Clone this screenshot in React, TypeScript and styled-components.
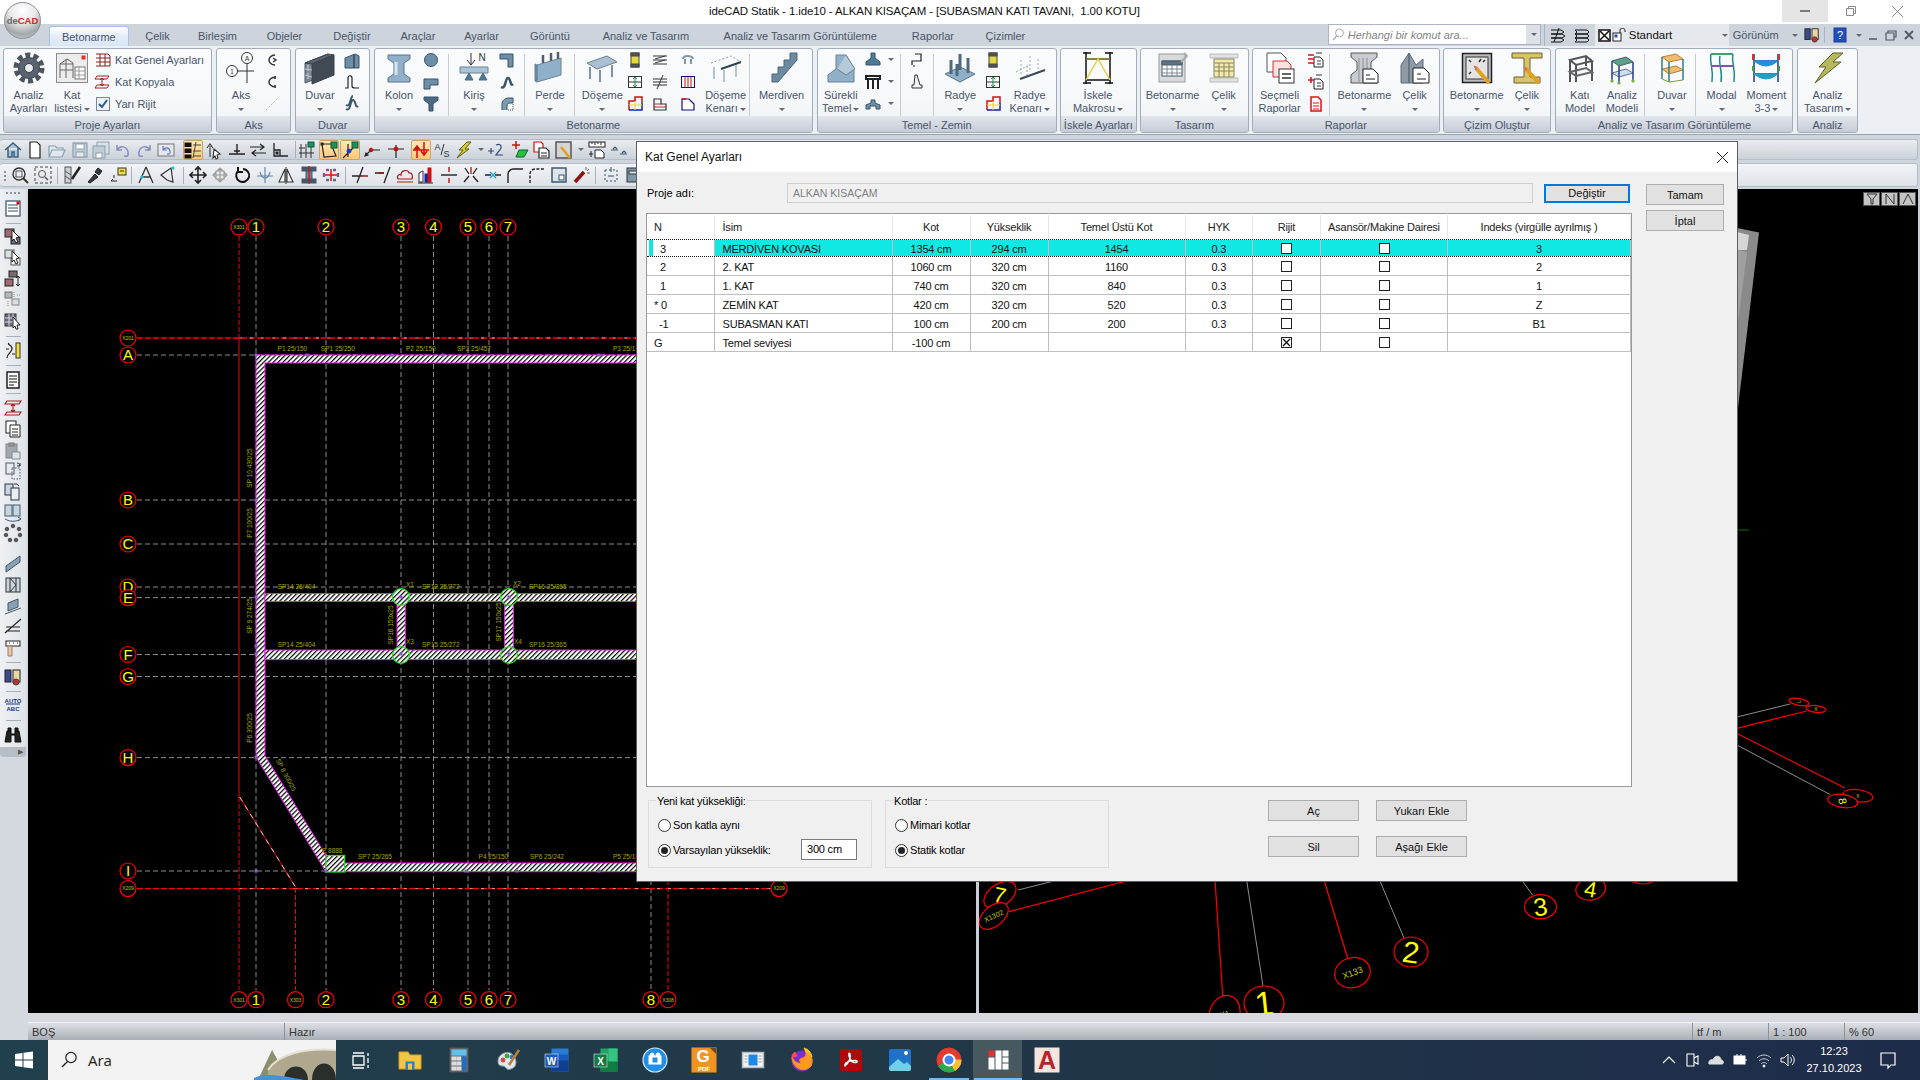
import React from "react"
import styled, { createGlobalStyle } from "styled-components"

const GlobalStyle = createGlobalStyle`
  html, body { margin: 0; padding: 0; background: #000; }
  body { font-family: "Liberation Sans", Arial, sans-serif; font-size: 11px; color: #000; }
  * { box-sizing: border-box; }
`

const IconText = styled.text`
  font-family: "Liberation Sans", sans-serif;
  text-anchor: middle;
  fill: #333;
`

const MiniWord = styled.text`
  font-family: "Liberation Sans", sans-serif;
  font-size: 6px;
  font-weight: bold;
  text-anchor: middle;
  fill: #1a3a7a;
`

const TaskLetter = styled.text<{ $size?: number }>`
  font-family: "Liberation Sans", sans-serif;
  font-size: ${(p) => p.$size ?? 10}px;
  font-weight: bold;
  fill: #fff;
  text-anchor: middle;
`

const AutoLetter = styled.text`
  font-family: "Liberation Sans", sans-serif;
  font-size: 25px;
  font-weight: bold;
  fill: #b8242c;
  text-anchor: middle;
`

const HelpMark = styled.text`
  font-family: "Liberation Sans", sans-serif;
  font-size: 11px;
  text-anchor: middle;
  fill: #fff;
`

const P = (d: string, s = "#222", w = 1, f = "none") => <path d={d} stroke={s} strokeWidth={w} fill={f} />
const R = (x: number, y: number, w: number, h: number, f = "none", s = "#222", sw = 1) => (
  <rect x={x} y={y} width={w} height={h} fill={f} stroke={s} strokeWidth={sw} />
)
const C = (x: number, y: number, r: number, f = "none", s = "#222", sw = 1) => (
  <circle cx={x} cy={y} r={r} fill={f} stroke={s} strokeWidth={sw} />
)

const BLUE = "#8fb0c8"
const NAVY = "#10108a"

const largeIcons: Record<string, React.ReactNode> = {
  gear: (
    <>
      <circle cx="16" cy="16" r="13" fill="none" stroke="#4d5560" strokeWidth="5" strokeDasharray="5 3.17" />
      {C(16, 16, 10.5, "#5a6470", "#3f4750")}
      {C(16, 16, 4.5, "#e8eaec", "#343a42")}
    </>
  ),
  katlist: (
    <>
      {R(0.5, 1.5, 31, 29, "#ececec", "#8a8a8a")}
      {P("M4 26V12L11 7l6 4v15M4 18h13M4 12h13M10 7v19", "#666")}
      {R(19, 15, 10, 12, "#fff", "#777")}
      {P("M19 19h10M19 23h10M23 15v12", "#999")}
      {R(26, 4, 3, 3, "#e03030", "#e03030")}
    </>
  ),
  aks: (
    <>
      {C(22, 6, 5.5, "#fff", "#333")}
      {C(7, 19, 5.5, "#fff", "#333")}
      {P("M22 12v19M12 19h17", "#333")}
      <IconText x="22" y="8.5" fontSize="7">A</IconText>
      <IconText x="7" y="21.5" fontSize="7">1</IconText>
    </>
  ),
  wall: (
    <>
      {P("M1 11L24 2v20L1 31z", "#4a5560", 1, "#808b96")}
      {P("M1 11L24 2l6 1L8 12z", "#39424c", 1, "#5a6570")}
      {P("M8 12L30 3v20L8 32z", "#39424c", 1, "#414b55")}
      {P("M1 17l7 1M1 23l7 2M4 13v6M4 21v6", "#c0c8d0")}
    </>
  ),
  column: (
    <>
      {P("M5 3h22v4l-6 4v11l6 4v4H5v-4l6-4V11L5 7z", "#5a7488", 1, BLUE)}
      {P("M13 10v13", "#d8e6f0", 3)}
    </>
  ),
  beam: (
    <>
      {P("M2 15h28v6H2z", "#6a8296", 1, "#aac4d6")}
      {P("M7 28l4-7 4 7zM21 28l4-7 4 7z", "#4e6a80", 1, "#4e7a94")}
      {P("M13 1v12M9 8l4 5 4-5", "#333")}
      <IconText x="24" y="9" fontSize="10">N</IconText>
    </>
  ),
  shear: (
    <>
      {P("M3 13l24-7v17L3 30z", "#6a8296", 1, BLUE)}
      {P("M3 13l-2-1v17l2 1z", "#6a8296", 1, "#6f8aa0")}
      {P("M9 11V3M17 9V1M24 7V0", "#4e6070", 2.5)}
    </>
  ),
  slab: (
    <>
      {P("M1 11L21 4l10 6-20 7z", "#6a8296", 1, "#a8c0d2")}
      {P("M4 15v12M26 13v12M14 18v12", "#7a93a8", 2)}
    </>
  ),
  slabEdge: (
    <>
      <path d="M1 11L21 4l10 6" fill="none" stroke="#8ca0b0" strokeDasharray="2 2" />
      {P("M11 17l20-7", "#30404e", 2)}
      {P("M4 15v12M26 13v12M14 18v12", "#a0b4c4", 1.5)}
    </>
  ),
  stair: <>{P("M31 1h-7v7h-6v7h-6v7H6v8h6l19-22z", "#4a6478", 1, "#6d8aa0")}</>,
  strip: (
    <>
      {P("M11 3h10l8 14v13H3v-7l8-6z", "#6a8296", 1, BLUE)}
      {P("M21 3l9 14-9 6-9-6", "#6a8296", 1, "#b4cad8")}
    </>
  ),
  raft: (
    <>
      {P("M1 22l15-7 15 7-15 8z", "#5a7488", 1, BLUE)}
      {P("M7 22V8M16 18V2M24 21V6M13 24V12", "#4e6a80", 3)}
    </>
  ),
  raftEdge: (
    <>
      <path d="M2 20l13-7M7 22V8M16 18V2M24 21V6M13 24V12" fill="none" stroke="#9aabb8" strokeDasharray="2 2" />
      {P("M6 27l25-9", "#3a4a58", 2)}
    </>
  ),
  scaffold: (
    <>
      {P("M4 0v32M28 0v32M1 1h8M23 1h8M1 31h8M23 31h8", "#111", 1.5)}
      {P("M4 7h24M4 28h24", "#111", 1.5)}
      {P("M4 28L16 7l12 21", "#e8d040", 1.5)}
      {P("M4 7h24", "#e8d040", 0.8)}
    </>
  ),
  designRc: (
    <>
      {R(2, 2, 26, 28, "#d8dadc", "#9a9a9a")}
      {R(5, 9, 20, 15, "#fff", "#475a68")}
      {P("M5 9h20v4H5z", "#475a68", 1, "#5c7486")}
      {P("M5 17h20M5 21h20M10 13v11M15 13v11M20 13v11", "#7a8a96")}
      {P("M27 1l3 3-6 6", "#aaa", 2)}
    </>
  ),
  designSteel: (
    <>
      {P("M2 2h28v4H2zM2 26h28v4H2z", "#bbb", 1, "#e0e0e0")}
      {R(6, 7, 20, 18, "#f4eab0", "#8a8560")}
      {P("M6 11h20M6 15h20M6 19h20M11 11v14M16 11v14M21 11v14", "#8a8560")}
    </>
  ),
  report: (
    <>
      {P("M3 1h14l5 5v14H3z", "#555", 1, "#fff")}
      {P("M9 9h14l4 4v12H9z", "#d03030", 1, "#fde0e0")}
      {R(15, 17, 15, 14, "#fff", "#333")}
      {P("M18 22h9M18 26h9", "#333", 1.5)}
    </>
  ),
  repRc: (
    <>
      {P("M3 1h26v4l-6 5v8l6 5v8H3v-8l6-5v-8L3 5z", "#555", 1, "#c8ccd0")}
      {P("M11 6v24M15 6v24M19 6v24", "#8a8f96")}
      {P("M15 17h10l5 5v9H15z", "#222", 1, "#fff")}
      {P("M18 23h4M18 27h9", "#222")}
    </>
  ),
  repSteel: (
    <>
      {P("M2 31V13l8-12v30zM10 1l7 12 7-6v24H10z", "#5a6a78", 1, "#8f9aa6")}
      {P("M14 16h11l5 5v10H14z", "#222", 1, "#fff")}
      {P("M18 22h4M18 27h9", "#222")}
    </>
  ),
  drawRc: (
    <>
      {R(1.5, 1.5, 29, 29, "#bcbcbc", "#222", 1.5)}
      {R(5, 5, 22, 22, "#e4e4e4", "#333")}
      {P("M8 8l2 2M20 7l-2 3M24 8l-2 2M8 22l2-2", "#333", 1.5)}
      {P("M15 16l13 15", "#e0a020", 4)}
      {P("M13 14l3 1-1 3z", "#d87070", 1, "#d87070")}
    </>
  ),
  drawSteel: (
    <>
      {P("M1 1h30v5H19v19h10v6H3v-6h10V6H1z", "#6a6230", 1, "#d8c468")}
      {P("M15 17l13 14", "#e0a020", 4)}
      {P("M13 15l3 1-1 3z", "#d87070", 1, "#d87070")}
    </>
  ),
  solid: (
    <>
      {P("M6 8l16-4 6 5-16 4zM6 8v22M12 13v17M28 9v20M22 4v10", "#555", 2)}
      {P("M6 20l16-4 6 4-16 4z", "#666", 2)}
    </>
  ),
  anModel: (
    <>
      {P("M6 9l14-4 7 5-14 4z", "#44606a", 1, "#5da08a")}
      {P("M6 21l14-4 7 4-14 4z", "#5a70a0", 1, "#d0dcf0")}
      {P("M6 9v19M13 14v16M27 10v18", "#22408a", 1.5)}
      {C(6, 29, 1.2, "#80b040", "#80b040")}
      {C(13, 31, 1.2, "#80b040", "#80b040")}
      {C(27, 29, 1.2, "#80b040", "#80b040")}
    </>
  ),
  wallView: (
    <>
      {P("M6 5l14-3 7 5-14 3zM6 17l14-3 7 4-14 4z", "#b88030", 1, "#f0bc70")}
      {P("M6 5v22M13 10v20M27 7v21", "#2f7f8a", 1.5)}
      {P("M6 27l7 3 14-2", "#80a040")}
    </>
  ),
  modal: (
    <>
      {P("M5 2h22M5 2c-2 9 3 14 1 28M14 4c-2 9 3 14 1 26M27 2c-2 9 3 14 1 28", "#1f8a8a", 1.5)}
      {P("M5 14l22 0", "#8a50b0", 2)}
      {P("M5 2h22", "#3fa070", 2)}
    </>
  ),
  moment: (
    <>
      {P("M4 2v28M28 2v28M4 9h24M4 22h24", "#1a3a8a", 1.5)}
      {P("M4 9q12 10 24 0z", "#2090d8", 1, "#2090d8")}
      {P("M4 22q12 10 24 0z", "#20a0c0", 1, "#20a0c0")}
      {P("M3 2v6M29 2v6", "#d03030", 2)}
      {P("M3 14v5M29 14v5", "#40a040", 2)}
    </>
  ),
  bolt: <>{P("M21 1L7 15h7L3 31l26-21h-8l10-9z", "#606020", 1, "#b6b85e")}</>
}

const smallIcons: Record<string, React.ReactNode> = {
  stack: <>{P("M1 2h12l2 2v10M1 6h14M1 10h14M1 14h14M5 2v12M10 2v12", "#8a2020")}</>,
  copyFloor: <>{P("M2 2h12l-2 3H0zM2 11h12l-2 3H0zM7 5v6M5 6l2-2 2 2M5 10l2 2 2-2", "#a02020")}</>,
  check: (
    <>
      {R(1.5, 1.5, 13, 13, "#eef2f6", "#7a8796")}
      {P("M4 8l3 3 5-7", "#2a5a90", 2)}
    </>
  ),
  axisL: <>{P("M11 3c-4 0-6 3-6 5s2 5 6 5M9 6l3 2-3 2", "#333", 1.5)}</>,
  axisC: <>{P("M12 3c-5 0-7 3-7 5s2 5 7 5M11 2v3M11 11v3", "#333", 1.5)}</>,
  axisD: <path d="M2 14L14 2" stroke="#bbb" strokeDasharray="2 1.5" fill="none" />,
  wallA: (
    <>
      {P("M1 6l10-4 4 2v12H1z", "#37556a", 1, "#6d8ea6")}
      {P("M10 3v13", "#223")}
    </>
  ),
  wallB: <>{P("M1 14h3V4c0-3 4-3 4 0v8c0 2 3 2 3 2h4", "#222", 1.2)}</>,
  wallC: <>{P("M2 13c5 3 4-9 7-9s2 9 5 6M2 9c5 3 4-9 7-9", "#3a5a72", 2)}</>,
  circle: <>{C(8, 8, 6.5, "#6d8ea6", "#37556a")}</>,
  lcol: <>{P("M1 5h14v6H7v4H1z", "#37556a", 1, "#6d8ea6")}</>,
  cap: <>{P("M1 1h14v3l-5 4v7H6V8L1 4z", "#37556a", 1, "#4e6a80")}</>,
  beamL: <>{P("M1 2h13v13H9V7H1z", "#37556a", 1, "#6d8ea6")}</>,
  beamS: <>{P("M2 13c5 3 4-9 7-9s2 9 5 6", "#37556a", 2.5)}</>,
  beamC: (
    <>
      {P("M3 14V8c0-3 3-6 6-6h5v5h-3c-2 0-3 1-3 3v4", "#37556a", 1, "#7c9ab0")}
      <path d="M9 14h5V7" stroke="#555" strokeDasharray="1 1" fill="none" />
    </>
  ),
  panelY: (
    <>
      {R(4, 1, 8, 14, "#e4d840", "#444")}
      {R(4, 1, 8, 3, "#555", "#444")}
      {R(4, 12, 8, 3, "#555", "#444")}
    </>
  ),
  gridG: (
    <>
      {R(1.5, 2.5, 13, 11, "#fff", "#333")}
      {P("M1 8h14", "#333")}
      {P("M8 3v10M6 5l2-2 2 2M6 11l2 2 2-2", "#109040")}
    </>
  ),
  corner: (
    <>
      {P("M2 14V5h6V1h7v6", "#d01010", 1.5)}
      {P("M2 14h13V7", "#1020b0", 1.5)}
      {P("M2 9h13M8 5v9", "#e8d830")}
    </>
  ),
  slabH: <>{P("M1 4h14M3 7l10-3M1 8h14M3 11l10-3M1 12h14", "#333")}</>,
  slabTop: <>{P("M3 7c0-4 9-4 10 0M5 7v5M11 7v5", "#8099aa", 2)}</>,
  slash: <>{P("M1 5h14M1 8h14M1 11h14M11 1L5 15", "#333")}</>,
  arrows: (
    <>
      {R(1.5, 2.5, 13, 11, "#fff", NAVY)}
      {P("M5 3v10M8 3v10M11 3v10", "#d01010")}
    </>
  ),
  slabL: (
    <>
      {P("M2 14V3h7v5h5v6z", "#333", 1.2)}
      {P("M2 11h12M2 8h7", "#a03030")}
    </>
  ),
  slabK: (
    <>
      {P("M2 14V3h7l5 5v6z", NAVY, 1.2, "#fff")}
      {P("M2 3h4", "#d01010", 1.5)}
    </>
  ),
  stepA: (
    <>
      {P("M6 2h6v7H3v4", "#222", 1.2, "none")}
      {P("M4 14h2", "#222")}
    </>
  ),
  stepB: <>{P("M6 1h2l3 10h2v3H3v-3h2z", "#333", 1, "#f0f4f8")}</>,
  foot1: <>{P("M6 1h4v5l5 4v3H1v-3l5-4z", "#37556a", 1, "#4e7a94")}</>,
  foot2: <>{P("M1 2h14v3H1zM3 5v10M8 5v10M13 5v10", "#222", 2)}</>,
  foot3: <>{P("M6 4h4v3l5 2v4h-4v-3H5v3H1V9l5-2z", "#37556a", 1, "#6d8ea6")}</>,
  rpt1: (
    <>
      {P("M6 5h6l3 3v7H6z", "#222", 1, "#fff")}
      {P("M0 3h6M0 7h6M0 11h6", "#e01010", 1.5)}
      {P("M8 1h6M9 9h4M9 12h4", "#333")}
    </>
  ),
  rpt2: (
    <>
      {P("M6 5h6l3 3v7H6z", "#222", 1, "#fff")}
      {P("M0 6h6M3 3v6", "#e01010", 1.5)}
      {P("M8 1h6M9 9h4M9 12h4", "#333")}
    </>
  ),
  rpt3: (
    <>
      {P("M3 1h7l3 3v11H3z", "#e01010", 1.5, "#fff")}
      {P("M5 7h6M5 10h6M5 13h6", "#e01010")}
    </>
  ),
  quickA: <>{P("M1 3h10l3 2-3 2H1M1 7h11l3 2-3 2H1M1 11h10l3 2-3 2H1M9 1L4 15", "#111")}</>,
  quickB: <>{P("M1 3h12l2 2-2 2H1l2-2zM1 7h12l2 2-2 2H1l2-2zM1 11h12l2 2-2 2H1l2-2z", "#111")}</>
}

const toolIcons: Record<string, React.ReactNode> = {
  home: <>{P("M1 9l8-7 8 7M4 7v9h4v-5h2v5h4V7", "#3a6080", 1.5, "#a8c4d8")}</>,
  newdoc: <>{P("M4 1h7l3 3v13H4z", "#222", 1.2, "#fff")}</>,
  open: <>{P("M1 16V5h6l2 2h6v2M1 16l3-7h13l-3 7z", "#8ca0b0", 1.2, "#dfe8ee")}</>,
  save: (
    <>
      {R(2, 2, 14, 14, "#c0ccd6", "#8ca0b0", 1.2)}
      {R(5, 3, 8, 5, "#fff", "#8ca0b0")}
      {R(5, 11, 8, 5, "#e4eaf0", "#8ca0b0")}
    </>
  ),
  saveall: (
    <>
      {R(5, 1, 12, 12, "#d8e0e8", "#8ca0b0")}
      {R(1, 5, 12, 12, "#c0ccd6", "#8ca0b0")}
      {R(4, 12, 6, 5, "#fff", "#8ca0b0")}
    </>
  ),
  undo: <>{P("M4 4v5h5M4 9c3-5 10-4 11 2s-3 4-4 4", "#8a8ac8", 1.5)}</>,
  redo: <>{P("M14 4v5H9M14 9c-3-5-10-4-11 2s3 4 4 4", "#8a8ac8", 1.5)}</>,
  undo2: (
    <>
      {R(1, 3, 16, 12, "#e4e8ee", "#777")}
      {P("M6 5v4h4M6 9c2-3 6-3 7 1s-2 3-3 3", "#6a7ac0", 1.2)}
    </>
  ),
  layers: (
    <>
      {R(1, 2, 6, 3.5, "#111", "#111")}
      {R(1, 8, 6, 3.5, "#111", "#111")}
      {R(1, 14, 6, 3, "#111", "#111")}
      {P("M9 4h8M9 10h8M9 15h8M12 1L9 17", "#444")}
    </>
  ),
  cursor: <>{P("M5 16V5M2 7l3-4 3 4M9 8l6 5-3 1 1 3-2 1-1-3-2 2z", "#333", 1.1, "#fff")}</>,
  foot: <>{P("M9 3v10M1 13h16M6 10h6", "#222", 1.4)}</>,
  swap: <>{P("M1 6h14M11 3l4 3-4 3M17 12H3M7 9l-4 3 4 3", "#222", 1.2)}</>,
  ell: (
    <>
      {P("M3 2v13h14M3 9h6v6", "#222", 1.3)}
      {R(5, 11, 2, 2, "#222", "#222")}
    </>
  ),
  lockGrid: (
    <>
      {P("M3 3v14M8 3v14M13 5v12M1 12h15M1 7h6", "#333")}
      {R(10, 1, 6, 5, "#20905a", "#0c5c38")}
    </>
  ),
  lockPoly: (
    <>
      {P("M2 3h9l5 12-12 1z", "#222", 1.2)}
      {R(1, 2, 2, 2, "#222")}
      {R(11, 1, 6, 6, "#20905a", "#0c5c38")}
    </>
  ),
  lockSnap: (
    <>
      {P("M2 17L15 4M7 3v13", "#222", 1.2)}
      {C(8, 10, 2, "#1a3ac0", "#1a3ac0")}
      {R(11, 1, 6, 6, "#20905a", "#0c5c38")}
    </>
  ),
  pointA: (
    <>
      {P("M2 15l6-6h9M2 15l3-1-2-2z", "#222", 1.2)}
      {C(8, 9, 1.8, "#c01010", "#c01010")}
    </>
  ),
  pointB: (
    <>
      {P("M1 8h16M9 4v13", "#222", 1.2)}
      {C(9, 8, 2, "#c01010", "#c01010")}
    </>
  ),
  updown: <>{P("M5 17V6M2 9l3-4 3 4M12 1v12M9 10l3 4 3-4M1 9h16", "#d01010", 1.5)}</>,
  as: (
    <>
      <IconText x="4.5" y="9" fontSize="9">A</IconText>
      {P("M8 14L11 3", "#333")}
      <IconText x="13.5" y="16" fontSize="9">S</IconText>
    </>
  ),
  bolt: <>{P("M12 1L4 9h4l-6 8 12-9h-4l6-7z", "#5a5a10", 1, "#d8c830")}</>,
  plus2: (
    <>
      {P("M1 10h6M4 7v6", "#334a80", 1.2)}
      {P("M9 4c5-2 7 2 3 6l-3 4h7", "#334a80", 1.2)}
    </>
  ),
  greenPlus: (
    <>
      {P("M5 16l3-7h9l-4 7z", "#106030", 1, "#28c040")}
      {P("M1 4h8M5 0v8", "#d01010", 1.5)}
    </>
  ),
  copyRed: (
    <>
      {P("M2 1h7l2 2v8H2z", "#d01010", 1.2, "#fff")}
      {P("M7 7h7l3 3v7H7z", "#222", 1.2, "#fff")}
      {P("M9 12h6M9 15h6", "#222")}
    </>
  ),
  frameP: (
    <>
      {R(1, 1, 15, 16, "#d4d4d4", "#555", 1.5)}
      {P("M6 6l9 11", "#e0a020", 2.5)}
    </>
  ),
  ruler: (
    <>
      {R(1, 1, 16, 5, "#fff", "#222")}
      {P("M4 1v2M7 1v3M10 1v2M13 1v3", "#222")}
      {P("M7 9h6l3 3v5H7z", "#222", 1, "#fff")}
      {P("M3 10v6M1 13h4", "#222")}
    </>
  ),
  level: <>{P("M1 9h7M10 13h7M3 8l2-2 2 2M12 12l2-2 2 2", "#3a5a78", 1.2)}</>,
  zoomWin: (
    <>
      {C(8, 8, 6, "#e8eef4", "#333", 1.4)}
      {P("M12 12l5 5", "#333", 2)}
      {R(5, 5, 6, 6, "none", "#555")}
    </>
  ),
  zoomAll: (
    <>
      <rect x="1" y="1" width="16" height="16" fill="none" stroke="#444" strokeDasharray="3 2" />
      {C(8, 8, 3.5, "none", "#555")}
      {P("M11 11l3 3", "#555", 1.5)}
    </>
  ),
  brush: (
    <>
      {R(1, 1, 6, 16, "#c8d0d8", "#555")}
      {P("M1 5l6 4M1 10l6 4", "#555")}
      {P("M8 13l8-12", "#222", 2.5)}
    </>
  ),
  picker: <>{P("M2 16l7-8 3 3-8 6zM9 6l3-4 4 3-3 4z", "#222", 1, "#303840")}</>,
  tag: (
    <>
      {R(9, 2, 8, 7, "#f0e040", "#333")}
      {P("M2 15h6M2 15l2-2M5 12v-3", "#222")}
      {P("M11 5h4", "#333")}
    </>
  ),
  triA: (
    <>
      {P("M9 1L2 17M9 1l7 16M5 11h8", "#333", 1.3)}
      {C(5, 11, 1.2, "#20c0e0", "#20c0e0")}
    </>
  ),
  triB: (
    <>
      {P("M1 9l10-7 2 14-6-2z", "#333", 1.2)}
      {C(13, 2, 1.2, "#20c0e0", "#20c0e0")}
    </>
  ),
  move: <>{P("M9 1v16M1 9h16M6 4l3-3 3 3M6 14l3 3 3-3M4 6L1 9l3 3M14 6l3 3-3 3", "#222", 1.6)}</>,
  moveG: <>{P("M9 2v14M2 9h14M6 5l3-3 3 3M6 13l3 3 3-3M5 6L2 9l3 3M13 6l3 3-3 3M5 5h8v8H5z", "#999", 1.1)}</>,
  rotate: <>{P("M9 3a6.5 6.5 0 1 1-5 2M4 1v5h5", "#111", 2)}</>,
  axisCross: (
    <>
      {P("M9 1v16M1 10h16", "#6a8aa8", 1.2)}
      {P("M4 6c2 8 8 8 10 0", "#6a8aa8", 1.2)}
    </>
  ),
  mirror: (
    <>
      {P("M8 3L2 16h6zM10 3l6 13h-6z", "#333", 1.1, "#f0f4f8")}
      {P("M9 1v17", "#333")}
    </>
  ),
  ibar: (
    <>
      {R(2, 1, 14, 4, "#44586a", "#44586a")}
      {R(2, 13, 14, 4, "#44586a", "#44586a")}
      {R(6, 5, 6, 8, "#6a8296", "#44586a")}
      {P("M9 0v18", "#d01010", 1.2)}
    </>
  ),
  scatter: (
    <>
      {P("M4 4h3M11 4h3M4 14h3M11 14h3M2 7v4M16 7v4", "#668", 2.4)}
      {P("M9 3v12M3 9h12", "#e01010", 1.5)}
    </>
  ),
  trimA: (
    <>
      {P("M1 10h10M12 1L6 17", "#222", 1.3)}
      {P("M11 10h6", "#a01010", 1.5, "none")}
    </>
  ),
  trimB: (
    <>
      {P("M1 7h9M16 1l-6 16", "#222", 1.3)}
      {P("M5 7h5", "#a01010", 1.5)}
    </>
  ),
  cloud: <>{P("M2 13c-2-4 2-5 3-4 0-5 7-6 8-2 3-1 4 3 3 6zM1 16h16", "#a02020", 1.2)}</>,
  barRed: (
    <>
      {P("M2 16V7l4-2v11z", "#333", 1, "#fff")}
      {R(8, 8, 3, 8, "#1020b0", "#1020b0")}
      {R(11, 2, 3, 14, "#d01010", "#d01010")}
      {P("M1 17h15", "#222")}
    </>
  ),
  hsplit: (
    <>
      {P("M1 9h16", "#222", 1.4)}
      {P("M9 1v5M9 12v5", "#c01010", 1.4)}
    </>
  ),
  xsplit: (
    <>
      {P("M2 16l5-6M16 16l-5-6M3 2l4 6M15 2l-4 6", "#222", 1.3)}
      {P("M9 1v7", "#c01010", 1.3)}
    </>
  ),
  hdot: (
    <>
      {P("M1 9h6M11 9h6", "#222", 1.3)}
      {P("M6 6l6 6M12 6l-6 6", "#20a0d8", 1.3)}
    </>
  ),
  filletA: <>{P("M2 17V8c0-3 3-5 5-5h10", "#222", 1.4)}</>,
  filletB: <path d="M2 17V8c0-3 3-5 5-5h10" fill="none" stroke="#222" strokeWidth="1.4" strokeDasharray="3 1.5" />,
  rectP: (
    <>
      {R(2, 2, 14, 14, "#dde4ea", "#33506a", 1.4)}
      {R(9, 9, 5, 5, "#fff", "#33506a")}
    </>
  ),
  wand: (
    <>
      {P("M2 16l9-10", "#901010", 3.5)}
      {P("M13 1v3M16 3l-2 2M17 7h-3", "#666")}
    </>
  ),
  frameDots: (
    <>
      <rect x="3" y="4" width="12" height="11" fill="none" stroke="#33506a" strokeDasharray="2 2" />
      {P("M9 1v5M6 10h6", "#33506a")}
    </>
  ),
  barrel: (
    <>
      {R(3, 2, 12, 14, "#8098ac", "#333")}
      {R(5, 5, 8, 3, "#dde4ea", "#333")}
    </>
  ),
  list: (
    <>
      {R(2, 1, 14, 15, "#fff", "#33506a", 1.2)}
      {P("M4 5h10M4 8h10M4 11h10", "#33506a")}
      {R(13, 2, 2, 2, "#d01010", "#d01010")}
    </>
  ),
  selA: (
    <>
      {R(1, 1, 9, 8, "#a06a70", "#222")}
      {R(7, 9, 9, 7, "#6a6a7a", "#222")}
      {P("M8 2l7 7-3 1 2 4-2 1-2-4-2 2z", "#222", 1, "#fff")}
    </>
  ),
  selB: (
    <>
      {R(1, 1, 9, 8, "#d8dee4", "#555")}
      {R(7, 9, 9, 7, "#e8ecf0", "#555")}
      {P("M8 2l7 7-3 1 2 4-2 1-2-4-2 2z", "#222", 1, "#fff")}
    </>
  ),
  selC: (
    <>
      {R(5, 1, 8, 6, "#7a6a70", "#222")}
      {R(1, 9, 8, 7, "#a06a70", "#222")}
      {P("M14 6v10M12 8l2-2 2 2M12 14l2 2 2-2", "#222")}
    </>
  ),
  selD: (
    <>
      {R(1, 1, 7, 6, "#b0b8c0", "#777")}
      {R(8, 8, 7, 6, "#d8dee4", "#888")}
      <path d="M10 1v6M13 4h4M4 10v6" stroke="#888" strokeDasharray="1 1" fill="none" />
    </>
  ),
  gridCursor: (
    <>
      {R(1, 2, 11, 12, "#6a6a80", "#333")}
      {P("M1 6h11M1 10h11M5 2v12M9 2v12", "#ddd")}
      {P("M9 5l7 8-3 0 1 4-2 0-1-3-2 2z", "#222", 1, "#fff")}
    </>
  ),
  yel: (
    <>
      {R(12, 1, 4, 15, "#f0e040", "#333")}
      {P("M3 16c0-5 6-6 5-10S3 3 5 1", "#222", 1.3)}
      {P("M2 7h3M8 12h3", "#222")}
    </>
  ),
  doc: (
    <>
      {R(3, 1, 12, 16, "#fff", "#111", 1.4)}
      {P("M5 5h8M5 8h8M5 11h8M5 14h5", "#111")}
    </>
  ),
  copyFloor: <>{P("M3 2h14l-2 3H1zM3 13h14l-2 3H1zM9 5v8M7 7l2-2 2 2M7 11l2 2 2-2", "#a02020", 1.1)}</>,
  paste: (
    <>
      {R(2, 1, 10, 12, "#fff", "#222")}
      {P("M6 5h10v12H6z", "#222", 1, "#fff")}
      {P("M8 9h6M8 12h6M8 15h6", "#222")}
    </>
  ),
  pasteG: (
    <>
      {R(2, 2, 11, 14, "#a0a8b0", "#888")}
      {R(5, 1, 5, 3, "#999", "#777")}
      {P("M8 10h8v7H8z", "#888", 1, "#dde4ea")}
    </>
  ),
  copyDash: (
    <>
      {R(2, 1, 8, 11, "#e4eaf0", "#556")}
      <rect x="8" y="6" width="8" height="11" fill="none" stroke="#556" strokeDasharray="1.5 1.5" />
      {P("M13 1c2 0 3 2 3 3M16 1v3h-3", "#334", 1)}
    </>
  ),
  copyPair: (
    <>
      {R(1, 1, 8, 11, "#c8d4de", "#334")}
      {R(7, 5, 8, 12, "#e8eef2", "#334")}
      {P("M10 1h3l2 2", "#334")}
    </>
  ),
  pairCurve: (
    <>
      {R(1, 1, 7, 11, "#c8d4de", "#44607a")}
      {R(9, 1, 7, 11, "#c8d4de", "#44607a")}
      {P("M1 15c5 3 11 3 16 0M14 13l3 2-3 2", "#44607a")}
    </>
  ),
  ring: (
    <>
      {[[9, 2], [15, 5], [16, 11], [12, 16], [6, 16], [2, 11], [3, 5]].map(([x, y]) => (
        <circle key={x * 100 + y} cx={x} cy={y} r="1.8" fill="#556" stroke="#222" strokeWidth=".6" />
      ))}
    </>
  ),
  slashPanel: <>{P("M2 17L16 7V1L2 11z", "#44586a", 1, "#8aa0b4")}</>,
  film: (
    <>
      {R(2, 2, 14, 14, "#c8d4de", "#333")}
      {P("M6 2v14M12 2v14M6 2l6 7-6 7", "#333")}
    </>
  ),
  stackW: <>{P("M4 6l10-4v8L4 14zM1 17l16-6", "#44586a", 1, "#8aa0b4")}</>,
  strike: <>{P("M1 16L17 2M2 10h14M2 14h14", "#222", 1.1)}</>,
  hook: (
    <>
      {R(2, 2, 14, 5, "#fff", "#222")}
      {P("M4 7h4v10H4z", "#a67c60", 1, "#e0c8a8")}
      {P("M5 4h1M9 4h1M13 4h1", "#222")}
    </>
  ),
  tools: (
    <>
      {R(1, 2, 6, 12, "#3a4a8a", "#222")}
      {R(9, 2, 7, 12, "#e8d8a0", "#222")}
      {C(12, 14, 3, "#c03030", "#444")}
    </>
  ),
  auto: (
    <>
      <MiniWord x="9" y="6.5">AUTO</MiniWord>
      {P("M2 8h14", "#1a3a7a")}
      <MiniWord x="9" y="15">ABC</MiniWord>
    </>
  ),
  binoc: (
    <>
      {P("M3 5h4v3h4V5h4l2 11h-6V9H7v7H1z", "#111", 1, "#222")}
      {P("M4 2h3v3H4zM11 2h3v3h-3z", "#111", 1, "#222")}
    </>
  )
}

const Small = styled.svg<{ $size?: number }>`
  width: ${(p) => p.$size ?? 16}px;
  height: ${(p) => p.$size ?? 16}px;
  display: block;
  flex: none;
  overflow: visible;
`

const Page = styled.div`
  width: 1920px;
  height: 1080px;
  position: relative;
  overflow: hidden;
  display: flex;
  flex-direction: column;
  background: #d4d9e0;
`

const TitleBar = styled.div`
  height: 24px;
  flex: none;
  background: #fff;
  display: flex;
  align-items: flex-start;
  padding-left: 709px;
`

const AppTitle = styled.div`
  font-size: 11.5px;
  line-height: 22px;
  color: #111;
  white-space: pre;
  letter-spacing: -0.12px;
`

const WinButtons = styled.div`
  margin-left: auto;
  display: flex;
`

const WinBtn = styled.div<{ $hot?: boolean }>`
  width: 46px;
  height: 22px;
  display: flex;
  align-items: center;
  justify-content: center;
  background: ${(p) => (p.$hot ? "#e5e5e5" : "transparent")};
`

const Logo = styled.div`
  position: absolute;
  left: 4px;
  top: 2px;
  width: 37px;
  height: 37px;
  border-radius: 50%;
  z-index: 3;
  border: 1px solid #8b8f94;
  background: radial-gradient(circle at 50% 22%, #fff 0, #e8e8e8 40%, #a4a7ab 72%, #d9dadb 100%);
  display: flex;
  align-items: center;
  justify-content: center;
  overflow: hidden;
  font-size: 9.5px;
  font-weight: bold;
  color: #6a6a6a;
  white-space: nowrap;
  span {
    color: #d82020;
    font-weight: bold;
  }
`

const TabRow = styled.div`
  height: 22px;
  flex: none;
  background: #ced4dc;
  display: flex;
  padding-left: 49px;
  align-items: flex-end;
`

const Tab = styled.div<{ $w: number; $active?: boolean }>`
  width: ${(p) => p.$w}px;
  height: 20px;
  flex: none;
  display: flex;
  align-items: center;
  justify-content: center;
  font-size: 11px;
  color: #47556a;
  ${(p) =>
    p.$active &&
    `background: linear-gradient(#ffffff, #e6eef8 45%, #d7e6f7);
     border: 1px solid #a9c4e0;
     border-bottom: none;
     border-radius: 3px 3px 0 0;`}
`

const SearchBox = styled.div`
  margin-left: 285px;
  width: 213px;
  height: 21px;
  margin-bottom: 1px;
  flex: none;
  border: 1px solid #aab3bf;
  display: flex;
  align-items: center;
  background: #dde1e7;
`

const SearchField = styled.div`
  width: 197px;
  height: 19px;
  background: #fff;
  display: flex;
  align-items: center;
  gap: 3px;
  padding-left: 3px;
  font-style: italic;
  color: #848484;
  font-size: 11px;
`

const Caret = styled.span<{ $ml?: number }>`
  flex: none;
  width: 0;
  height: 0;
  border-left: 3px solid transparent;
  border-right: 3px solid transparent;
  border-top: 3px solid #667;
  display: inline-block;
  margin-left: ${(p) => p.$ml ?? 0}px;
  vertical-align: middle;
`

const QuickGroup = styled.div`
  display: flex;
  align-items: center;
  height: 22px;
  flex: none;
  margin-left: 3px;
  width: 51px;
  gap: 8px;
  border-left: 1px solid #aab3bf;
  padding-left: 5px;
`

const StandartBox = styled.div`
  width: 134px;
  height: 22px;
  flex: none;
  background: #e5e8ec;
  display: flex;
  align-items: center;
  padding-left: 3px;
  gap: 1px;
  font-size: 11.5px;
  color: #111;
`

const StandartName = styled.span`
  margin-left: 2px;
  width: 92px;
`

const ViewLabel = styled.div`
  margin-left: 4px;
  width: 71px;
  flex: none;
  height: 22px;
  display: flex;
  align-items: center;
  color: #47556a;
`

const TopTools = styled.div`
  display: flex;
  align-items: center;
  height: 22px;
  flex: none;
  gap: 4px;
  color: #556;
  font-size: 13px;
`

const TinyDivider = styled.div`
  width: 1px;
  height: 16px;
  background: #aab3bf;
  margin-right: 3px;
`

const RibbonBar = styled.div`
  height: 89px;
  flex: none;
  background: #eceff3;
  display: flex;
  padding-left: 3px;
  padding-top: 2px;
  align-items: flex-start;
  border-bottom: 1px solid #9aa1ab;
`

const Group = styled.div<{ $w: number; $ml: number }>`
  width: ${(p) => p.$w}px;
  margin-left: ${(p) => p.$ml}px;
  height: 85px;
  flex: none;
  border: 1px solid #a3adb9;
  border-radius: 3px;
  background: linear-gradient(#fafbfc, #f7f8fa 60%, #eef1f4);
  display: flex;
  flex-direction: column;
`

const GroupBody = styled.div`
  flex: 1;
  display: flex;
  padding-top: 3px;
  min-height: 0;
`

const GroupLabel = styled.div`
  height: 16px;
  flex: none;
  background: linear-gradient(#e2e6ec, #c6ccd6);
  text-align: center;
  line-height: 18px;
  font-size: 11px;
  color: #47556a;
  white-space: nowrap;
  overflow: hidden;
`

const BigButton = styled.div<{ $w: number; $ml: number }>`
  width: ${(p) => p.$w}px;
  margin-left: ${(p) => p.$ml}px;
  flex: none;
  display: flex;
  flex-direction: column;
  align-items: center;
  font-size: 11px;
  color: #47556a;
`

const BigIcon = styled.svg`
  width: 32px;
  height: 32px;
  flex: none;
  overflow: visible;
  margin-bottom: 5px;
`

const BigLine = styled.div`
  height: 13px;
  line-height: 13px;
  white-space: nowrap;
`

const SmallCol = styled.div<{ $w: number; $ml: number }>`
  width: ${(p) => p.$w}px;
  margin-left: ${(p) => p.$ml}px;
  flex: none;
  display: flex;
  flex-direction: column;
  align-items: center;
  gap: 6px;
`

const CaretCol = styled(SmallCol)`
  gap: 19px;
  padding-top: 6px;
`

const TextCol = styled(SmallCol)`
  align-items: flex-start;
`

const TextRow = styled.div`
  height: 16px;
  display: flex;
  align-items: center;
  gap: 4px;
  font-size: 11px;
  color: #47556a;
  white-space: nowrap;
`

const RibbonSep = styled.div<{ $ml: number }>`
  width: 1px;
  height: 62px;
  margin-top: 2px;
  flex: none;
  margin-left: ${(p) => p.$ml}px;
  background: #c5ccd4;
`

const Bars = styled.div`
  height: 54px;
  flex: none;
  background: #cfd5dd;
  display: flex;
  flex-direction: column;
  padding-top: 4px;
  gap: 3px;
`

const ToolBar = styled.div<{ $light?: boolean }>`
  height: ${(p) => (p.$light ? 24 : 21)}px;
  flex: none;
  display: flex;
  align-items: center;
  border-radius: 3px;
  margin: 0 2px 0 0;
  background: ${(p) =>
    p.$light ? "linear-gradient(#f1f3f6, #dfe3e9)" : "linear-gradient(#e9ecf0, #ccd2da)"};
  border: 1px solid #b6bdc7;
  border-left: none;
`

const ToolSlot = styled.div<{ $ml: number; $w: number; $on?: boolean }>`
  width: ${(p) => p.$w}px;
  height: 20px;
  flex: none;
  margin-left: ${(p) => p.$ml}px;
  display: flex;
  align-items: center;
  justify-content: center;
  ${(p) =>
    p.$on &&
    `background: linear-gradient(#ffe9b6, #fbc874);
     border: 1px solid #c9a56e;
     border-radius: 2px;`}
`

const ToolSep = styled.div<{ $ml: number }>`
  width: 1px;
  height: 17px;
  flex: none;
  margin-left: ${(p) => p.$ml}px;
  background: #a8b0ba;
`

const Grip = styled.div<{ $vertical?: boolean }>`
  width: ${(p) => (p.$vertical ? 14 : 2)}px;
  height: ${(p) => (p.$vertical ? 2 : 12)}px;
  flex: none;
  background: repeating-linear-gradient(
    ${(p) => (p.$vertical ? "90deg" : "0deg")},
    #8a929c 0 2px,
    transparent 2px 4px
  );
`

const Workspace = styled.div`
  flex: 1;
  min-height: 0;
  display: flex;
`

const SideColumn = styled.div`
  width: 28px;
  flex: none;
  background: #d4d9e0;
`

const SidePanel = styled.div`
  width: 26px;
  height: 558px;
  padding-top: 3px;
  background: linear-gradient(90deg, #eef0f3, #dfe3e8);
  border-radius: 0 0 4px 0;
  display: flex;
  flex-direction: column;
  align-items: center;
`

const SideSlot = styled.div<{ $mt: number }>`
  margin-top: ${(p) => p.$mt}px;
  flex: none;
  width: 18px;
  height: 18px;
`

const SideSep = styled.div<{ $mt: number }>`
  margin-top: ${(p) => p.$mt}px;
  flex: none;
  width: 15px;
  height: 1px;
  background: #a8b0ba;
`

const SideTail = styled.div`
  width: 26px;
  height: 10px;
  background: #b7bdc6;
  border-radius: 0 0 4px 4px;
  display: flex;
  align-items: center;
  justify-content: flex-end;
  padding-right: 3px;
  font-size: 7px;
  color: #555;
`

const MainColumn = styled.div`
  flex: 1;
  min-width: 0;
  display: flex;
  flex-direction: column;
`

const Views = styled.div`
  height: 824px;
  flex: none;
  display: flex;
  background: #c9ced6;
  padding-right: 2px;
  gap: 3px;
`

const View = styled.div<{ $w: number }>`
  width: ${(p) => p.$w}px;
  flex: none;
  background: #000;
  position: relative;
  overflow: hidden;
`

const ViewSvg = styled.svg`
  display: block;
  width: 100%;
  height: 100%;
`

const AxisText = styled.text<{ $size?: number }>`
  font-family: "Liberation Sans", sans-serif;
  font-size: ${(p) => p.$size ?? 15}px;
  fill: #ffff00;
  text-anchor: middle;
`

const TagText = styled.text<{ $size?: number }>`
  font-family: "Liberation Sans", sans-serif;
  font-size: ${(p) => p.$size ?? 5}px;
  fill: #c8c800;
  text-anchor: middle;
`

const NoteText = styled.text`
  font-family: "Liberation Sans", sans-serif;
  font-size: 6.5px;
  fill: #a6a600;
`

const ViewCube = styled.div`
  position: absolute;
  right: 2px;
  top: 3px;
  display: flex;
  gap: 1px;
`

const CubeBtn = styled.div`
  width: 17px;
  height: 14px;
  background: #c4c4c4;
  border: 1px solid #555;
  display: flex;
  align-items: center;
  justify-content: center;
`

const StatusBar = styled.div`
  flex: 1;
  display: flex;
  flex-direction: column;
  background: #d6dae0;
`

const StatusRow = styled.div`
  margin-top: 9px;
  height: 18px;
  border-top: 1px solid #f0f2f5;
  background: linear-gradient(#dde0e5, #a9aeb6);
  display: flex;
  align-items: center;
  font-size: 11px;
  color: #333;
`

const StatusCell = styled.div<{ $w: number; $line?: boolean }>`
  width: ${(p) => p.$w}px;
  flex: none;
  height: 100%;
  padding-left: 4px;
  line-height: 18px;
  border-left: ${(p) => (p.$line ? "1px solid #8e939b" : "none")};
`

const Taskbar = styled.div`
  height: 40px;
  flex: none;
  background: linear-gradient(90deg, #21404e, #213847 45%, #1e2c4a);
  display: flex;
  align-items: center;
`

const StartBtn = styled.div`
  width: 48px;
  height: 40px;
  flex: none;
  display: flex;
  align-items: center;
  justify-content: center;
`

const TaskSearch = styled.div`
  width: 288px;
  height: 40px;
  flex: none;
  background: #f3f3f3;
  display: flex;
  align-items: center;
  padding-left: 12px;
  position: relative;
  overflow: hidden;
  font-family: "Open Sans", sans-serif;
  font-size: 15px;
  color: #222;
`

const SearchLabel = styled.span`
  margin-left: 10px;
`

const BridgeArt = styled.svg`
  position: absolute;
  right: 0;
  top: 0;
  width: 82px;
  height: 40px;
`

const TaskApp = styled.div<{ $on?: boolean; $open?: boolean }>`
  width: 49px;
  height: 40px;
  flex: none;
  display: flex;
  align-items: center;
  justify-content: center;
  background-color: ${(p) => (p.$on ? "#47585f" : "transparent")};
  background-image: ${(p) => (p.$on || p.$open ? "linear-gradient(#76b9ed, #76b9ed)" : "none")};
  background-repeat: no-repeat;
  background-position: bottom center;
  background-size: ${(p) => (p.$on ? "48px" : "40px")} 2px;
`

const TaskGlyph = styled.svg`
  width: 26px;
  height: 26px;
  flex: none;
`

const Tray = styled.div`
  margin-left: auto;
  display: flex;
  align-items: center;
  height: 40px;
  gap: 8px;
  padding-right: 11px;
  color: #fff;
`

const Clock = styled.div`
  width: 62px;
  margin-left: -1px;
  text-align: center;
  font-size: 11px;
  line-height: 17px;
  color: #fff;
`

const NotifyBtn = styled.div`
  width: 42px;
  display: flex;
  justify-content: center;
  margin-left: -6px;
`

const Dialog = styled.div`
  position: absolute;
  left: 637px;
  top: 142px;
  width: 1100px;
  height: 739px;
  background: #f0f0f0;
  display: flex;
  flex-direction: column;
  z-index: 5;
  box-shadow: 0 0 0 1px #5c5f64;
`

const DialogTitle = styled.div`
  height: 30px;
  flex: none;
  background: #fff;
  display: flex;
  align-items: center;
  padding: 0 8px 0 8px;
  font-size: 12px;
  color: #111;
  justify-content: space-between;
`

const DialogBody = styled.div`
  flex: 1;
  display: flex;
  padding-left: 9px;
`

const MainPane = styled.div`
  width: 986px;
  flex: none;
  display: flex;
  flex-direction: column;
`

const SidePane = styled.div`
  width: 78px;
  margin-left: 14px;
  padding-top: 12px;
  display: flex;
  flex-direction: column;
  gap: 5px;
`

const ProjectRow = styled.div`
  margin-top: 11px;
  height: 20px;
  display: flex;
  align-items: center;
  flex: none;
`

const ProjectLabel = styled.div`
  width: 141px;
  padding-left: 1px;
  flex: none;
`

const ProjectInput = styled.div`
  width: 746px;
  height: 20px;
  flex: none;
  border: 1px solid #cfcfcf;
  background: #f0f0f0;
  color: #808080;
  line-height: 18px;
  padding-left: 5px;
  font-size: 10.5px;
`

const Btn = styled.div<{ $primary?: boolean; $h?: number }>`
  height: ${(p) => p.$h ?? 21}px;
  flex: none;
  background: #e1e1e1;
  border: ${(p) => (p.$primary ? "2px solid #0078d7" : "1px solid #adadad")};
  display: flex;
  align-items: center;
  justify-content: center;
  color: #111;
  font-size: 11px;
`

const ChangeBtn = styled(Btn)`
  width: 86px;
  margin-left: 11px;
`

const FloorGrid = styled.div`
  margin-top: 10px;
  height: 574px;
  flex: none;
  background: #fff;
  border: 1px solid #9a9a9a;
  padding-top: 1px;
  font-size: 11px;
  letter-spacing: -0.2px;
  color: #111;
`

const COLS = "67.5px 178px 78px 78px 137px 67.5px 68px 127px auto"

const HeadRow = styled.div`
  display: grid;
  grid-template-columns: ${COLS};
  height: 24px;
`

const HeadCell = styled.div<{ $pad?: number }>`
  display: flex;
  align-items: center;
  justify-content: ${(p) => (p.$pad ? "flex-start" : "center")};
  padding-left: ${(p) => p.$pad ?? 0}px;
  border-right: 1px solid #e7e7e7;
  color: #222;
`

const DataRow = styled.div<{ $on?: boolean }>`
  display: grid;
  grid-template-columns: ${COLS};
  height: ${(p) => (p.$on ? 18 : 19)}px;
  border-bottom: ${(p) => (p.$on ? "1px dotted #111" : "1px solid #bfbfbf")};
  border-top: ${(p) => (p.$on ? "1px dotted #111" : "none")};
`

const Cell = styled.div<{ $left?: number; $on?: boolean }>`
  display: flex;
  align-items: center;
  justify-content: ${(p) => (p.$left !== undefined ? "flex-start" : "center")};
  padding-left: ${(p) => p.$left ?? 0}px;
  padding-top: 2px;
  border-right: 1px solid #bfbfbf;
  background: ${(p) => (p.$on ? "#10e8e4" : "transparent")};
  white-space: pre;
`

const FirstCell = styled(Cell)<{ $strip?: boolean }>`
  background: ${(p) =>
    p.$strip ? "linear-gradient(90deg, #fff 0 2px, #10e8e4 2px 6px, #fff 6px)" : "transparent"};
`

const TickBox = styled.div`
  width: 11px;
  height: 11px;
  margin-top: -2px;
  background: #fff;
  border: 1px solid #222;
  display: flex;
`

const BottomRow = styled.div`
  margin-top: 13px;
  display: flex;
  align-items: flex-start;
  flex: none;
`

const FieldBox = styled.div<{ $ml: number }>`
  width: 224px;
  height: 68px;
  margin-left: ${(p) => p.$ml}px;
  flex: none;
  border: 1px solid #dcdcdc;
  position: relative;
  padding: 14px 14px 0 9px;
  display: flex;
  flex-direction: column;
  gap: 5px;
`

const FieldLegend = styled.div`
  position: absolute;
  left: 7px;
  top: -6px;
  background: #f0f0f0;
  padding: 0 1px;
  line-height: 12px;
  letter-spacing: -0.2px;
`

const RadioRow = styled.div`
  height: 20px;
  display: flex;
  align-items: center;
  gap: 2px;
  letter-spacing: -0.2px;
  white-space: nowrap;
`

const RadioMark = styled.div<{ $on?: boolean }>`
  width: 13px;
  height: 13px;
  border-radius: 50%;
  flex: none;
  background: #fff;
  border: 1px solid #333;
  display: flex;
  align-items: center;
  justify-content: center;
  &::after {
    content: "";
    width: 7px;
    height: 7px;
    border-radius: 50%;
    background: ${(p) => (p.$on ? "#222" : "transparent")};
  }
`

const HeightInput = styled.div`
  margin-left: auto;
  margin-top: -2px;
  width: 56px;
  height: 21px;
  background: #fff;
  border: 1px solid #7a7a7a;
  line-height: 19px;
  padding-left: 5px;
`

const ActionGrid = styled.div`
  margin-left: 159px;
  display: grid;
  grid-template-columns: 91px 91px;
  grid-auto-rows: 21px;
  gap: 15px 17px;
`

type Slot =
  | { k: "L"; c: number; w: number; icon: string; a: string; b?: string; arrow?: boolean }
  | { k: "S"; c: number; icons: string[]; w?: number }
  | { k: "A"; c: number }
  | { k: "T"; c: number; w: number; rows: [string, string][] }
  | { k: "|"; c: number }

type RibbonGroup = { title: string; left: number; right: number; items: Slot[] }

const groups: RibbonGroup[] = [
  {
    title: "Proje Ayarları",
    left: 3,
    right: 212,
    items: [
      { k: "L", c: 28.6, w: 44, icon: "gear", a: "Analiz", b: "Ayarları" },
      { k: "L", c: 72, w: 38, icon: "katlist", a: "Kat", b: "listesi", arrow: true },
      {
        k: "T",
        c: 150,
        w: 110,
        rows: [
          ["stack", "Kat Genel Ayarları"],
          ["copyFloor", "Kat Kopyala"],
          ["check", "Yarı Rijit"]
        ]
      }
    ]
  },
  {
    title: "Aks",
    left: 216,
    right: 291.4,
    items: [
      { k: "L", c: 241, w: 34, icon: "aks", a: "Aks", arrow: true },
      { k: "S", c: 272, icons: ["axisL", "axisC", "axisD"] }
    ]
  },
  {
    title: "Duvar",
    left: 295.5,
    right: 370,
    items: [
      { k: "L", c: 320, w: 36, icon: "wall", a: "Duvar", arrow: true },
      { k: "S", c: 352, icons: ["wallA", "wallB", "wallC"] }
    ]
  },
  {
    title: "Betonarme",
    left: 374,
    right: 812.6,
    items: [
      { k: "L", c: 399, w: 34, icon: "column", a: "Kolon", arrow: true },
      { k: "S", c: 430.6, icons: ["circle", "lcol", "cap"] },
      { k: "|", c: 449 },
      { k: "L", c: 474, w: 34, icon: "beam", a: "Kiriş", arrow: true },
      { k: "S", c: 507, icons: ["beamL", "beamS", "beamC"] },
      { k: "|", c: 524.5 },
      { k: "L", c: 550, w: 34, icon: "shear", a: "Perde", arrow: true },
      { k: "|", c: 574.7 },
      { k: "L", c: 602.4, w: 44, icon: "slab", a: "Döşeme", arrow: true },
      { k: "S", c: 634.7, icons: ["panelY", "gridG", "corner"] },
      { k: "S", c: 660.4, icons: ["slabH", "slash", "slabL"] },
      { k: "S", c: 687.8, icons: ["slabTop", "arrows", "slabK"] },
      { k: "L", c: 725.7, w: 44, icon: "slabEdge", a: "Döşeme", b: "Kenarı", arrow: true },
      { k: "|", c: 750 },
      { k: "L", c: 781.6, w: 50, icon: "stair", a: "Merdiven", arrow: true }
    ]
  },
  {
    title: "Temel - Zemin",
    left: 816.7,
    right: 1056.7,
    items: [
      { k: "L", c: 840.8, w: 44, icon: "strip", a: "Sürekli", b: "Temel", arrow: true },
      { k: "S", c: 873.5, icons: ["foot1", "foot2", "foot3"] },
      { k: "A", c: 891 },
      { k: "|", c: 900.4 },
      { k: "S", c: 917.5, icons: ["stepA", "stepB"] },
      { k: "|", c: 934 },
      { k: "L", c: 960.4, w: 44, icon: "raft", a: "Radye", arrow: true },
      { k: "S", c: 993, icons: ["panelY", "gridG", "corner"] },
      { k: "L", c: 1029.8, w: 44, icon: "raftEdge", a: "Radye", b: "Kenarı", arrow: true }
    ]
  },
  {
    title: "İskele Ayarları",
    left: 1060,
    right: 1136.7,
    items: [{ k: "L", c: 1098, w: 60, icon: "scaffold", a: "İskele", b: "Makrosu", arrow: true }]
  },
  {
    title: "Tasarım",
    left: 1140,
    right: 1248.6,
    items: [
      { k: "L", c: 1172.6, w: 56, icon: "designRc", a: "Betonarme", arrow: true },
      { k: "L", c: 1223.7, w: 30, icon: "designSteel", a: "Çelik", arrow: true }
    ]
  },
  {
    title: "Raporlar",
    left: 1252,
    right: 1439.6,
    items: [
      { k: "L", c: 1279.6, w: 46, icon: "report", a: "Seçmeli", b: "Raporlar" },
      { k: "S", c: 1316, icons: ["rpt1", "rpt2", "rpt3"] },
      { k: "|", c: 1330 },
      { k: "L", c: 1364.5, w: 56, icon: "repRc", a: "Betonarme", arrow: true },
      { k: "L", c: 1414.7, w: 30, icon: "repSteel", a: "Çelik", arrow: true }
    ]
  },
  {
    title: "Çizim Oluştur",
    left: 1443,
    right: 1551.4,
    items: [
      { k: "L", c: 1476.7, w: 56, icon: "drawRc", a: "Betonarme", arrow: true },
      { k: "L", c: 1527, w: 30, icon: "drawSteel", a: "Çelik", arrow: true }
    ]
  },
  {
    title: "Analiz ve Tasarım Görüntüleme",
    left: 1555.5,
    right: 1793.5,
    items: [
      { k: "L", c: 1580, w: 36, icon: "solid", a: "Katı", b: "Model" },
      { k: "L", c: 1622, w: 38, icon: "anModel", a: "Analiz", b: "Modeli" },
      { k: "|", c: 1645 },
      { k: "L", c: 1672, w: 34, icon: "wallView", a: "Duvar", arrow: true },
      { k: "|", c: 1695.5 },
      { k: "L", c: 1721.6, w: 36, icon: "modal", a: "Modal", arrow: true },
      { k: "L", c: 1766.5, w: 46, icon: "moment", a: "Moment", b: "3-3", arrow: true }
    ]
  },
  {
    title: "Analiz",
    left: 1797.5,
    right: 1857.6,
    items: [{ k: "L", c: 1827.7, w: 50, icon: "bolt", a: "Analiz", b: "Tasarım", arrow: true }]
  }
]

const tabs: [string, number][] = [
  ["Betonarme", 79.6],
  ["Çelik", 57.8],
  ["Birleşim", 62.2],
  ["Objeler", 71.8],
  ["Değiştir", 63.2],
  ["Araçlar", 68.8],
  ["Ayarlar", 58.4],
  ["Görüntü", 78.4],
  ["Analiz ve Tasarım", 113.6],
  ["Analiz ve Tasarım Görüntüleme", 195],
  ["Raporlar", 70.4],
  ["Çizimler", 74.6]
]

const slotWidth = (s: Slot) => {
  if (s.k === "L" || s.k === "T") return s.w
  if (s.k === "|") return 1
  if (s.k === "A") return 6
  return s.w ?? 14
}

const withMargins = <T,>(items: T[], start: number, center: (t: T) => number, width: (t: T) => number) => {
  let x = start
  return items.map((item) => {
    const w = width(item)
    const ml = center(item) - w / 2 - x
    x = center(item) + w / 2
    return { item, ml, w }
  })
}

const RibbonItems = ({ group }: { group: RibbonGroup }) => (
  <>
    {withMargins(group.items, group.left + 1, (s) => s.c, slotWidth).map(({ item, ml, w }, i) => {
      if (item.k === "|") return <RibbonSep key={i} $ml={ml} />
      if (item.k === "A")
        return (
          <CaretCol key={i} $w={w} $ml={ml}>
            <Caret />
            <Caret />
            <Caret />
          </CaretCol>
        )
      if (item.k === "S")
        return (
          <SmallCol key={i} $w={w} $ml={ml}>
            {item.icons.map((name) => (
              <Small key={name} viewBox="0 0 16 16">
                {smallIcons[name]}
              </Small>
            ))}
          </SmallCol>
        )
      if (item.k === "T")
        return (
          <TextCol key={i} $w={w} $ml={ml}>
            {item.rows.map(([icon, text]) => (
              <TextRow key={text}>
                <Small viewBox="0 0 16 16">{smallIcons[icon]}</Small>
                {text}
              </TextRow>
            ))}
          </TextCol>
        )
      return (
        <BigButton key={i} $w={w} $ml={ml}>
          <BigIcon viewBox="0 0 32 32">{largeIcons[item.icon]}</BigIcon>
          <BigLine>{item.a}</BigLine>
          <BigLine>
            {item.b}
            {item.arrow && <Caret $ml={item.b ? 2 : 0} />}
          </BigLine>
        </BigButton>
      )
    })}
  </>
)

type Tool = { c: number; i?: string; on?: boolean; sep?: boolean; caret?: boolean; grip?: boolean }

const topTools: Tool[] = [
  { c: 13, i: "home" },
  { c: 34.7, i: "newdoc" },
  { c: 57, i: "open" },
  { c: 79.6, i: "save" },
  { c: 101, i: "saveall" },
  { c: 122.4, i: "undo" },
  { c: 145, i: "redo" },
  { c: 166.5, i: "undo2" },
  { c: 192.7, i: "layers", on: true },
  { c: 214, i: "cursor" },
  { c: 237.5, i: "foot" },
  { c: 258.4, i: "swap" },
  { c: 279.6, i: "ell" },
  { c: 296, sep: true },
  { c: 307, i: "lockGrid" },
  { c: 328.6, i: "lockPoly", on: true },
  { c: 350, i: "lockSnap", on: true },
  { c: 372, i: "pointA" },
  { c: 396, i: "pointB" },
  { c: 421, i: "updown", on: true },
  { c: 442, i: "as" },
  { c: 464.5, i: "bolt" },
  { c: 481.6, caret: true },
  { c: 496, i: "plus2" },
  { c: 520, i: "greenPlus" },
  { c: 541, i: "copyRed" },
  { c: 564, i: "frameP" },
  { c: 581, caret: true },
  { c: 597, i: "ruler" },
  { c: 619, i: "level" }
]

const lowTools: Tool[] = [
  { c: 5, grip: true },
  { c: 20.4, i: "zoomWin" },
  { c: 43, i: "zoomAll" },
  { c: 58, sep: true },
  { c: 72.6, i: "brush" },
  { c: 94.7, i: "picker" },
  { c: 118, i: "tag" },
  { c: 132, sep: true },
  { c: 146, i: "triA" },
  { c: 169.4, i: "triB" },
  { c: 183.7, sep: true },
  { c: 198, i: "move" },
  { c: 220, i: "moveG" },
  { c: 243, i: "rotate" },
  { c: 265, i: "axisCross" },
  { c: 286.5, i: "mirror" },
  { c: 309, i: "ibar" },
  { c: 330.6, i: "scatter" },
  { c: 345.7, sep: true },
  { c: 360, i: "trimA" },
  { c: 383, i: "trimB" },
  { c: 405, i: "cloud" },
  { c: 426.5, i: "barRed" },
  { c: 449, i: "hsplit" },
  { c: 470.6, i: "xsplit" },
  { c: 492.6, i: "hdot" },
  { c: 515, i: "filletA" },
  { c: 537, i: "filletB" },
  { c: 559, i: "rectP" },
  { c: 581.6, i: "wand" },
  { c: 596, sep: true },
  { c: 611, i: "frameDots" },
  { c: 632.7, i: "barrel" }
]

const toolWidth = (t: Tool) => {
  if (t.sep) return 1
  if (t.grip) return 2
  if (t.caret) return 8
  return t.on ? 20 : 18
}

const ToolRow = ({ tools, light }: { tools: Tool[]; light?: boolean }) => (
  <ToolBar $light={light}>
    {withMargins(tools, 0, (t) => t.c, toolWidth).map(({ item, ml, w }) => {
      if (item.sep) return <ToolSep key={item.c} $ml={ml} />
      if (item.grip)
        return (
          <ToolSlot key={item.c} $ml={ml} $w={w}>
            <Grip />
          </ToolSlot>
        )
      if (item.caret)
        return (
          <ToolSlot key={item.c} $ml={ml} $w={w}>
            <Caret />
          </ToolSlot>
        )
      return (
        <ToolSlot key={item.c} $ml={ml} $w={w} $on={item.on}>
          <Small $size={18} viewBox="0 0 18 18">
            {toolIcons[item.i as string]}
          </Small>
        </ToolSlot>
      )
    })}
  </ToolBar>
)

// y centres are page coordinates, turned into margins below
const sideItems: { y: number; i?: string }[] = [
  { y: 209, i: "list" },
  { y: 223 },
  { y: 237, i: "selA" },
  { y: 258, i: "selB" },
  { y: 279, i: "selC" },
  { y: 300, i: "selD" },
  { y: 321, i: "gridCursor" },
  { y: 336 },
  { y: 351, i: "yel" },
  { y: 365 },
  { y: 380, i: "doc" },
  { y: 393 },
  { y: 408, i: "copyFloor" },
  { y: 429, i: "paste" },
  { y: 451, i: "pasteG" },
  { y: 471, i: "copyDash" },
  { y: 492, i: "copyPair" },
  { y: 513, i: "pairCurve" },
  { y: 533, i: "ring" },
  { y: 564, i: "slashPanel" },
  { y: 585, i: "film" },
  { y: 606, i: "stackW" },
  { y: 626, i: "strike" },
  { y: 648, i: "hook" },
  { y: 662 },
  { y: 677, i: "tools" },
  { y: 691 },
  { y: 705, i: "auto" },
  { y: 720 },
  { y: 735, i: "binoc" }
]

const Sidebar = () => (
  <SideColumn>
    <SidePanel>
      <Grip $vertical />
      {withMargins(sideItems, 194, (s) => s.y, (s) => (s.i ? 18 : 1)).map(({ item, ml }) =>
        item.i ? (
          <SideSlot key={item.y} $mt={ml}>
            <Small $size={18} viewBox="0 0 18 18">
              {toolIcons[item.i]}
            </Small>
          </SideSlot>
        ) : (
          <SideSep key={item.y} $mt={ml} />
        )
      )}
    </SidePanel>
    <SideTail>▶</SideTail>
  </SideColumn>
)

const Bubble = ({ x, y, t, tag, rx = 8, ry = 8, rot = 0, size, spin = 0 }: {
  x: number
  y: number
  t: string
  tag?: boolean
  rx?: number
  ry?: number
  rot?: number
  size?: number
  spin?: number
}) => (
  <g transform={`translate(${x} ${y})`}>
    <ellipse rx={rx} ry={ry} fill="#000" stroke="#ff0000" strokeWidth="1.2" transform={`rotate(${rot})`} />
    <g transform={`rotate(${spin})`}>
      {tag ? (
        <TagText y={(size ?? 5) * 0.36} $size={size}>{t}</TagText>
      ) : (
        <AxisText y={(size ?? 15) * 0.36} $size={size}>{t}</AxisText>
      )}
    </g>
  </g>
)

const vAxes: [string, number][] = [
  ["1", 256],
  ["2", 326],
  ["3", 401],
  ["4", 433.5],
  ["5", 468],
  ["6", 489],
  ["7", 508]
]

const hAxes: [string, number][] = [
  ["A", 355],
  ["B", 500],
  ["C", 544],
  ["D", 587],
  ["E", 597.6],
  ["F", 654.5],
  ["G", 676.5],
  ["H", 757.6],
  ["I", 871]
]

const markers: [number, number][] = [
  [256, 355], [307, 355], [392, 355], [443, 355], [599, 355],
  [256, 500], [256, 551], [256, 597], [256, 646], [256, 654], [256, 757],
  [401, 597], [509, 597], [401, 654], [509, 654],
  [256, 871], [326, 871], [466, 871], [517, 871], [599, 871]
]

const notes: [string, number, number][] = [
  ["P1 25/150", 277.6, 351],
  ["SP1 25/250", 320.8, 351],
  ["P2 25/150", 406, 351],
  ["SP2 25/457", 457, 351],
  ["P3 25/150", 613, 351],
  ["SP14 26/404", 277.7, 589],
  ["SP12 25/272", 422, 589],
  ["SP16 25/365", 529, 589],
  ["SP14 25/404", 277.7, 647],
  ["SP15 25/272", 422, 647],
  ["SP16 25/365", 529, 647],
  ["SP7 25/265", 358, 859],
  ["P4 25/150", 478.6, 859],
  ["SP6 25/242", 530, 859],
  ["P5 25/150", 613, 859],
  ["X1", 406, 587],
  ["X2", 513, 586],
  ["X3", 406, 644],
  ["X4", 514, 644],
  ["P 8888", 322, 853]
]

const sideNotes: [string, number, number, number][] = [
  ["SP 10 430/25", 252, 468, -90],
  ["P7 100/25", 252, 523, -90],
  ["SP 9 274/25", 252, 616, -90],
  ["P6 300/25", 252, 728, -90],
  ["SP16 150x25", 393, 625, -90],
  ["SP17 150x25", 501, 622, -90],
  ["SP 8 300/25", 284, 776, 62]
]

const LeftDrawing = () => (
  <ViewSvg viewBox="28 189 948 824">
    <defs>
      <pattern id="hatch" width="3.4" height="3.4" patternUnits="userSpaceOnUse" patternTransform="rotate(45)">
        <rect width="3.4" height="3.4" fill="#fff" />
        <rect width="1.2" height="3.4" fill="#000" />
      </pattern>
    </defs>
    {vAxes.map(([t, x]) => (
      <path key={t} d={`M${x} 236V990`} stroke="#8c8c8c" strokeDasharray="5 3" fill="none" />
    ))}
    <path d="M651 880V990" stroke="#8c8c8c" strokeDasharray="5 3" fill="none" />
    <path d="M668 880V990" stroke="#f00" strokeDasharray="5 2" fill="none" />
    {hAxes.map(([t, y]) => (
      <path key={t} d={`M137 ${y}H779`} stroke="#8c8c8c" strokeDasharray="5 3" fill="none" />
    ))}
    <path d="M137 338H779" stroke="#f00" strokeWidth="1.3" strokeDasharray="6 2" fill="none" />
    <path d="M239 338H779" stroke="#fff" strokeWidth=".6" strokeDasharray="3 8" fill="none" />
    <path d="M137 888.6H779" stroke="#f00" strokeWidth="1.3" strokeDasharray="6 2" fill="none" />
    <path d="M239 888.6H779" stroke="#fff" strokeWidth=".6" strokeDasharray="3 8" fill="none" />
    <path d="M239 236V338" stroke="#f00" strokeDasharray="5 2" fill="none" />
    <path d="M239 338V797" stroke="#f00" fill="none" />
    <path d="M239 797V990" stroke="#f00" strokeDasharray="5 2" fill="none" />
    <path d="M295.5 888V990" stroke="#f00" strokeDasharray="5 2" fill="none" />
    <path d="M239.7 797L295.5 887" stroke="#f00" strokeWidth="1" fill="none" />
    <path d="M239.7 797L295.5 887" stroke="#fff" strokeDasharray="5 5" strokeWidth=".8" fill="none" />

    <g fill="url(#hatch)" stroke="#ea1aea" strokeWidth="1">
      <path d="M256 355H640V363H265V755.5L326 855.5V872L256 757z" />
      <rect x="344.6" y="863" width="296" height="8.7" />
      <rect x="265" y="593.5" width="375" height="8" />
      <rect x="265" y="650" width="375" height="9.6" />
      <rect x="397" y="601" width="8.4" height="49" />
      <rect x="504.5" y="601" width="9" height="49" />
    </g>
    <rect x="326" y="855.5" width="18.6" height="16.5" fill="url(#hatch)" stroke="#20e020" strokeWidth="1.2" />
    <g fill="url(#hatch)" stroke="#20e020" strokeWidth="1.2">
      <circle cx="401" cy="597" r="8.4" />
      <circle cx="509" cy="597" r="8.4" />
      <circle cx="401" cy="655" r="8.4" />
      <circle cx="509" cy="655" r="8.4" />
    </g>
    {markers.map(([x, y]) => (
      <rect key={`${x}-${y}`} x={x - 1.5} y={y - 1.5} width="3" height="3" fill="#8a5ad0" />
    ))}
    {notes.map(([t, x, y]) => (
      <NoteText key={`${t}${x}${y}`} x={x} y={y}>
        {t}
      </NoteText>
    ))}
    {sideNotes.map(([t, x, y, r]) => (
      <NoteText key={t} textAnchor="middle" transform={`translate(${x} ${y}) rotate(${r})`}>
        {t}
      </NoteText>
    ))}
    <Bubble x={239} y={227} t="X301" tag />
    <Bubble x={128} y={338} t="X201" tag />
    <Bubble x={128} y={888.6} t="X209" tag />
    <Bubble x={779} y={888.6} t="X209" tag />
    {vAxes.map(([t, x]) => (
      <Bubble key={t} x={x} y={227} t={t} />
    ))}
    {hAxes.map(([t, y]) => (
      <Bubble key={t} x={128} y={y} t={t} />
    ))}
    <Bubble x={239} y={999.7} t="X301" tag />
    <Bubble x={295.5} y={999.7} t="X303" tag />
    <Bubble x={668} y={999.7} t="X308" tag />
    {[...vAxes, ["8", 651] as [string, number]].map(([t, x]) => (
      <Bubble key={t} x={x} y={999.7} t={t} />
    ))}
  </ViewSvg>
)

const RightDrawing = () => (
  <ViewSvg viewBox="979 189 939 824">
    <path d="M1737 228L1759 232.6L1737 416z" fill="#8a8a8a" />
    <path d="M1737 232L1749 235L1747 250L1737 250z" fill="#d6d6d6" />
    <path d="M1737 250L1747 252L1737 330z" fill="#a0a0a0" />
    <path d="M1737 530H1749" stroke="#0d6a10" fill="none" />
    <path d="M1737 717L1790 704M1737 745L1830 794.5" stroke="#8c8c8c" fill="none" />
    <path d="M1737 728.4L1806.7 711M1737 733.5L1845 788" stroke="#f00" strokeWidth="1.2" fill="none" />
    <Bubble x={1799} y={702} t="7" rx={10} ry={3.4} rot={10} size={5} spin={70} />
    <Bubble x={1816} y={709} t="X" rx={10} ry={3.4} rot={6} tag />
    <Bubble x={1858} y={795.7} t="X" rx={15} ry={6} rot={8} tag />
    <Bubble x={1842.7} y={801} t="8" rx={15} ry={6.5} rot={8} size={11} spin={80} />
    <g stroke="#8c8c8c" fill="none">
      <path d="M1018 890L1058 880M1246.6 880L1263 986M1379.5 880L1404 938M1521.5 880L1532.6 895" />
    </g>
    <g stroke="#f00" strokeWidth="1.2" fill="none">
      <path d="M1009 911.7L1130 880M1215 880L1223 1000M1324 880L1347.6 958" />
    </g>
    <Bubble x={1000} y={895} t="7" rx={18} ry={11} rot={-35} size={22} spin={12} />
    <Bubble x={993.7} y={916} t="X1302" rx={17} ry={10} rot={-40} tag size={7} spin={-25} />
    <Bubble x={1224.5} y={1014} t="X1" rx={19} ry={15} rot={-70} tag size={8} spin={-15} />
    <Bubble x={1264} y={1003} t="1" rx={20} ry={17} size={34} spin={-6} />
    <Bubble x={1352.5} y={972.7} t="X133" rx={18} ry={15} rot={-15} tag size={9} spin={-20} />
    <Bubble x={1411} y={952} t="2" rx={17} ry={15} size={30} spin={8} />
    <Bubble x={1540.5} y={906.7} t="3" rx={16} ry={12} size={25} spin={-8} />
    <Bubble x={1590.7} y={889} t="4" rx={15} ry={11} rot={-10} size={22} spin={10} />
    <Bubble x={1642.8} y={878} t="" rx={12} ry={6} />
  </ViewSvg>
)

const rows = [
  { n: "3", pad: 13, name: "MERDİVEN KOVASI", kot: "1354 cm", h: "294 cm", t: "1454", hyk: "0.3", idx: "3" },
  { n: "2", pad: 13, name: "2. KAT", kot: "1060 cm", h: "320 cm", t: "1160", hyk: "0.3", idx: "2" },
  { n: "1", pad: 13, name: "1. KAT", kot: "740 cm", h: "320 cm", t: "840", hyk: "0.3", idx: "1" },
  { n: "* 0", pad: 7, name: "ZEMİN KAT", kot: "420 cm", h: "320 cm", t: "520", hyk: "0.3", idx: "Z" },
  { n: "-1", pad: 12, name: "SUBASMAN KATI", kot: "100 cm", h: "200 cm", t: "200", hyk: "0.3", idx: "B1" },
  { n: "G", pad: 7, name: "Temel seviyesi", kot: "-100 cm", h: "", t: "", hyk: "", idx: "" }
]

const heads = ["Kot", "Yükseklik", "Temel Üstü Kot", "HYK", "Rijit", "Asansör/Makine Dairesi", "Indeks (virgülle ayrılmış )"]

const Tick = ({ on }: { on?: boolean }) => (
  <TickBox>
    {on && (
      <Small $size={9} viewBox="0 0 9 9">
        {P("M1 1l7 7M8 1L1 8", "#111", 1.4)}
      </Small>
    )}
  </TickBox>
)

const FloorDialog = () => (
  <Dialog>
    <DialogTitle>
      Kat Genel Ayarları
      <Small $size={13} viewBox="0 0 13 13">
        {P("M1 1l11 11M12 1L1 12", "#222", 1)}
      </Small>
    </DialogTitle>
    <DialogBody>
      <MainPane>
        <ProjectRow>
          <ProjectLabel>Proje adı:</ProjectLabel>
          <ProjectInput>ALKAN KISAÇAM</ProjectInput>
          <ChangeBtn $primary $h={19}>
            Değiştir
          </ChangeBtn>
        </ProjectRow>
        <FloorGrid>
          <HeadRow>
            <HeadCell $pad={7}>N</HeadCell>
            <HeadCell $pad={8}>İsim</HeadCell>
            {heads.map((h) => (
              <HeadCell key={h}>{h}</HeadCell>
            ))}
          </HeadRow>
          {rows.map((r, i) => (
            <DataRow key={r.n} $on={i === 0}>
              <FirstCell $left={r.pad} $strip={i === 0}>
                {r.n}
              </FirstCell>
              <Cell $left={8} $on={i === 0}>
                {r.name}
              </Cell>
              <Cell $on={i === 0}>{r.kot}</Cell>
              <Cell $on={i === 0}>{r.h}</Cell>
              <Cell $on={i === 0}>{r.t}</Cell>
              <Cell $on={i === 0}>{r.hyk}</Cell>
              <Cell $on={i === 0}>
                <Tick on={r.n === "G"} />
              </Cell>
              <Cell $on={i === 0}>
                <Tick />
              </Cell>
              <Cell $on={i === 0}>{r.idx}</Cell>
            </DataRow>
          ))}
        </FloorGrid>
        <BottomRow>
          <FieldBox $ml={2}>
            <FieldLegend>Yeni kat yüksekliği:</FieldLegend>
            <RadioRow>
              <RadioMark />
              Son katla aynı
            </RadioRow>
            <RadioRow>
              <RadioMark $on />
              Varsayılan yükseklik:
              <HeightInput>300 cm</HeightInput>
            </RadioRow>
          </FieldBox>
          <FieldBox $ml={13}>
            <FieldLegend>Kotlar :</FieldLegend>
            <RadioRow>
              <RadioMark />
              Mimari kotlar
            </RadioRow>
            <RadioRow>
              <RadioMark $on />
              Statik kotlar
            </RadioRow>
          </FieldBox>
          <ActionGrid>
            <Btn>Aç</Btn>
            <Btn>Yukarı Ekle</Btn>
            <Btn>Sil</Btn>
            <Btn>Aşağı Ekle</Btn>
          </ActionGrid>
        </BottomRow>
      </MainPane>
      <SidePane>
        <Btn>Tamam</Btn>
        <Btn>İptal</Btn>
      </SidePane>
    </DialogBody>
  </Dialog>
)

const glyphs: React.ReactNode[] = [
  // task view
  <>{P("M5 9h11v9H5zM5 6h11M5 21h11M20 6v3M20 11v5M20 18v3", "#fff", 1.3)}</>,
  // explorer
  <>
    {P("M2 5h9l2 3h11v14H2z", "#d8a020", 1, "#f4c542")}
    {R(9, 15, 8, 7, "#2a7fd0", "#2a7fd0")}
    {R(11.5, 17, 3, 5, "#f4c542", "#f4c542")}
  </>,
  // calculator
  <>
    {R(4, 1, 18, 24, "#6f6f6f", "#555")}
    {R(6, 3, 14, 5, "#5ec2f0", "#5ec2f0")}
    {R(6, 10, 4, 3, "#ddd", "#ddd")}
    {R(11, 10, 4, 3, "#ddd", "#ddd")}
    {R(16, 10, 4, 13, "#1f6fc0", "#1f6fc0")}
    {R(6, 15, 4, 3, "#ddd", "#ddd")}
    {R(11, 15, 4, 3, "#ddd", "#ddd")}
    {R(6, 20, 4, 3, "#ddd", "#ddd")}
    {R(11, 20, 4, 3, "#ddd", "#ddd")}
  </>,
  // paint
  <>
    {P("M3 14c0-7 9-11 14-7 5 4 6 13-1 15-5 2-5-3-8-3s-5-1-5-5z", "#8a9aa8", 1, "#dfe7ee")}
    {C(8, 13, 2, "#e04040", "#e04040")}
    {C(12, 9, 2, "#40a040", "#40a040")}
    {C(17, 10, 2, "#3070d0", "#3070d0")}
    {P("M14 18L24 3", "#c08030", 2.5)}
  </>,
  // word
  <>
    {R(8, 2, 16, 22, "#2b7cd3", "#2b7cd3")}
    {R(8, 8, 16, 6, "#185abd", "#185abd")}
    {R(8, 14, 16, 10, "#103f91", "#103f91")}
    {R(1, 7, 13, 13, "#185abd", "#fff", 0.5)}
    <TaskLetter x="7.5" y="17.5">W</TaskLetter>
  </>,
  // excel
  <>
    {R(8, 2, 16, 22, "#21a366", "#21a366")}
    {R(8, 14, 16, 10, "#107c41", "#107c41")}
    {R(16, 2, 8, 12, "#33c481", "#33c481")}
    {R(1, 7, 13, 13, "#107c41", "#fff", 0.5)}
    <TaskLetter x="7.5" y="17.5">X</TaskLetter>
  </>,
  // round blue app
  <>
    {C(13, 13, 12, "#1f8fe8", "#d8ecfa", 1.2)}
    {R(7, 9, 12, 8, "#fff", "#fff")}
    {C(10, 8, 2, "#fff", "#fff")}
    {C(16, 8, 2, "#fff", "#fff")}
    {R(11, 11, 4, 4, "#1f8fe8", "#1f8fe8")}
  </>,
  // orange pdf tile
  <>
    {R(1, 1, 24, 24, "#f39322", "#f39322")}
    {P("M19 1h6v6z", "#6a4a20", 0, "#6a4a20")}
    <TaskLetter x="12" y="15" $size={17}>G</TaskLetter>
    <TaskLetter x="13" y="23.500" $size={6}>PDF</TaskLetter>
  </>,
  // blue window
  <>
    {R(2.5, 5.5, 21, 15, "#f4f4f4", "#b8bcc0", 1.5)}
    {R(9, 8, 8, 10, "#1e88e5", "#1e88e5")}
    {P("M4.500 9h3M4.500 12h3M4.500 15h3M18.500 9h3M18.500 12h3M18.500 15h3", "#9aa0a6")}
  </>,
  // firefox
  <>
    {C(13, 14, 10, "#7a2fd0", "#7a2fd0")}
    {P("M3 10c0 11 12 17 19 9 3-6 0-13-6-16 2 4 1 7-2 8-4 0-4 3-2 5-4 1-7-2-9-6z", "#ff8a20", 1, "#ff9a20")}
    {P("M15 1c4 1 7 4 8 9-2-3-4-4-6-5z", "#ffc020", 1, "#ffc020")}
    {P("M3 10c0-2 1-4 3-5l2 4z", "#ff4a50", 1, "#ff4a50")}
  </>,
  // acrobat
  <>
    <rect x="2" y="2" width="22" height="22" rx="2" fill="#ae0a0a" />
    {P("M7 19c4-3 6-9 5-12-1-2-2 0 0 5 2 3 5 4 7 3 1-2-3-2-7-1-3 1-6 3-5 5z", "#fff", 1.4)}
  </>,
  // photos
  <>
    <rect x="2" y="2" width="22" height="22" rx="2" fill="#1f72c8" />
    {P("M2 20l9-8 6 5 3-2 4 4v3a2 2 0 0 1-2 2H4a2 2 0 0 1-2-2z", "#6fd0e8", 0, "#6fd0e8")}
    {C(19, 6, 1.6, "#fff", "#fff")}
  </>,
  // chrome
  <>
    {C(13, 13, 12, "#e33b2e", "#e33b2e")}
    {P("M13 13L2.6 19a12 12 0 0 0 16.4 4.4z", "#2da94f", 1, "#2da94f")}
    {P("M13 13h12a12 12 0 0 1-6 10.4z", "#fbc02d", 1, "#fbc02d")}
    {C(13, 13, 5.5, "#4285f4", "#fff", 2)}
  </>,
  // idecad
  <>
    {R(4, 4, 5, 5, "#e53030", "#e53030")}
    {R(4, 11, 5, 11, "#fff", "#fff")}
    {R(11, 4, 5, 18, "#fff", "#fff")}
    {R(18, 4, 5, 5, "#fff", "#fff")}
    {R(18, 11, 5, 4, "#fff", "#fff")}
    {R(18, 17, 5, 5, "#fff", "#fff")}
  </>,
  // autocad
  <>
    {R(1, 1, 24, 24, "#f5e5df", "#f5e5df")}
    <AutoLetter x="13" y="22">A</AutoLetter>
  </>
]

const TaskbarView = () => (
  <Taskbar>
    <StartBtn>
      <Small $size={18} viewBox="0 0 18 18">
        {P("M0 3l7.5-1v6.5H0zM8.5 1.8L18 .5v8H8.5zM0 9.500h7.5V16L0 15zM8.5 9.500H18v8l-9.500-1.300z", "#fff", 0, "#fff")}
      </Small>
    </StartBtn>
    <TaskSearch>
      <Small $size={18} viewBox="0 0 18 18">
        {C(11, 6.5, 5.2, "none", "#222", 1.2)}
        {P("M7.500 10.500L2 16", "#222", 1.4)}
      </Small>
      <SearchLabel>Ara</SearchLabel>
      <BridgeArt viewBox="0 0 82 40">
        {P("M4 40L18 10l9 16v14z", "#6a6a50", 0, "#8a8f70")}
        {P("M14 30C24 14 50 8 82 10V40H14z", "#b0a88e", 0, "#b0a88e")}
        {P("M30 40C30 22 54 22 54 40zM58 40C58 18 82 18 82 40z", "#2a2f2c", 0, "#2a2f2c")}
        {P("M14 30C24 14 50 8 82 10", "#e4e0d0", 2)}
        {P("M0 38c10-6 30-2 50 2H0z", "#4a90d8", 0, "#4a90d8")}
      </BridgeArt>
    </TaskSearch>
    {glyphs.map((g, i) => (
      <TaskApp key={i} $on={i === 13} $open={i === 12}>
        <TaskGlyph viewBox="0 0 26 26">{g}</TaskGlyph>
      </TaskApp>
    ))}
    <Tray>
      <Small $size={14} viewBox="0 0 14 14">
        {P("M1 10l6-6 6 6", "#fff", 1.2)}
      </Small>
      <Small $size={16} viewBox="0 0 16 16">
        {P("M3 2h7v12H3zM10 6l4-2v8l-4-2", "#fff", 1.1)}
      </Small>
      <Small $size={16} viewBox="0 0 16 16">
        {P("M1 12c-1-4 3-5 4-4 1-5 8-5 8 0 3 0 3 4 1 4z", "#ddd", 1, "#ddd")}
      </Small>
      <Small $size={16} viewBox="0 0 16 16">
        {R(2, 4, 11, 8, "#fff", "#fff")}
        {P("M5 2v2M9 2v2M14 7v2", "#fff")}
      </Small>
      <Small $size={16} viewBox="0 0 16 16">
        {P("M1 6c4-4 10-4 14 0M3 9c3-3 7-3 10 0M5 12c2-2 4-2 6 0", "#ccc", 1)}
        {C(8, 14, 1, "#fff", "#fff")}
      </Small>
      <Small $size={16} viewBox="0 0 16 16">
        {P("M1 6h3l4-4v12l-4-4H1zM10 5c2 2 2 4 0 6M12 3c3 3 3 7 0 10", "#fff", 1)}
      </Small>
      <Clock>
        12:23
        <br />
        27.10.2023
      </Clock>
      <NotifyBtn>
        <Small $size={18} viewBox="0 0 18 18">
          {P("M2 2h14v12h-4l-3 3v-3H2z", "#fff", 1.2)}
        </Small>
      </NotifyBtn>
    </Tray>
  </Taskbar>
)

const App = () => (
  <>
    <GlobalStyle />
    <Page>
      <TitleBar>
        <AppTitle>ideCAD Statik - 1.ide10 - ALKAN KISAÇAM - [SUBASMAN KATI TAVANI,  1.00 KOTU]</AppTitle>
        <WinButtons>
          <WinBtn $hot>
            <Small $size={10} viewBox="0 0 10 10">
              {P("M0 5h10", "#111")}
            </Small>
          </WinBtn>
          <WinBtn>
            <Small $size={10} viewBox="0 0 10 10">
              {P("M0.5 2.5h7v7h-7zM2.500 2.500v-2h7v7h-2", "#888")}
            </Small>
          </WinBtn>
          <WinBtn>
            <Small $size={11} viewBox="0 0 11 11">
              {P("M0 0l11 11M11 0L0 11", "#888")}
            </Small>
          </WinBtn>
        </WinButtons>
      </TitleBar>
      <Logo>
        de<span>CAD</span>
      </Logo>
      <TabRow>
        {tabs.map(([t, w], i) => (
          <Tab key={t} $w={w} $active={i === 0}>
            {t}
          </Tab>
        ))}
        <SearchBox>
          <SearchField>
            <Small $size={13} viewBox="0 0 13 13">
              {C(7.5, 5, 4, "none", "#aaa", 1)}
              {P("M4.500 8L1 12", "#aaa", 1.2)}
            </Small>
            Herhangi bir komut ara...
          </SearchField>
          <Caret $ml={5} />
        </SearchBox>
        <QuickGroup>
          <Small $size={16} viewBox="0 0 16 16">
            {smallIcons.quickA}
          </Small>
          <Small $size={16} viewBox="0 0 16 16">
            {smallIcons.quickB}
          </Small>
        </QuickGroup>
        <StandartBox>
          <Small $size={13} viewBox="0 0 13 13">
            {R(1, 1, 11, 11, "#fff", "#111", 1.5)}
            {P("M2 2l9 9M11 2l-9 9", "#111", 1.5)}
          </Small>
          <Small $size={14} viewBox="0 0 14 14">
            {R(1, 5, 8, 8, "#fff", "#222")}
            {R(3, 7, 2, 2, "#1a50c0", "#1a50c0")}
            {P("M8 5V2c0-2 5-2 5 0v2", "#222")}
          </Small>
          <StandartName>Standart</StandartName>
          <Caret />
        </StandartBox>
        <ViewLabel>
          Görünüm
          <Caret $ml={13} />
        </ViewLabel>
        <TopTools>
          <Small $size={16} viewBox="0 0 18 18">
            {toolIcons.tools}
          </Small>
          <TinyDivider />
          <Small $size={16} viewBox="0 0 16 16">
            {R(2, 1, 12, 14, "#2050c0", "#1a3a90")}
            <HelpMark x="8" y="12">?</HelpMark>
          </Small>
          <Caret $ml={4} />
          <Small $size={14} viewBox="0 0 14 14">
            {P("M3 11h8", "#556", 1.5)}
          </Small>
          <Small $size={14} viewBox="0 0 14 14">
            {P("M2 5h8v7H2zM4 5V3h8v6h-2", "#556", 1.2)}
          </Small>
          <Small $size={14} viewBox="0 0 14 14">
            {P("M3 3l8 8M11 3l-8 8", "#556", 1.8)}
          </Small>
        </TopTools>
      </TabRow>
      <RibbonBar>
        {groups.map((g, i) => (
          <Group key={g.title} $w={g.right - g.left} $ml={i === 0 ? 0 : g.left - groups[i - 1].right}>
            <GroupBody>
              <RibbonItems group={g} />
            </GroupBody>
            <GroupLabel>{g.title}</GroupLabel>
          </Group>
        ))}
      </RibbonBar>
      <Bars>
        <ToolRow tools={topTools} />
        <ToolRow tools={lowTools} light />
      </Bars>
      <Workspace>
        <Sidebar />
        <MainColumn>
          <Views>
            <View $w={948}>
              <LeftDrawing />
            </View>
            <View $w={939}>
              <RightDrawing />
              <ViewCube>
                <CubeBtn>
                  <Small $size={12} viewBox="0 0 12 12">
                    {P("M1 1h10L7 6v5H5V6z", "#333")}
                  </Small>
                </CubeBtn>
                <CubeBtn>
                  <Small $size={12} viewBox="0 0 12 12">
                    {P("M2 11V1l8 10V1", "#333")}
                  </Small>
                </CubeBtn>
                <CubeBtn>
                  <Small $size={12} viewBox="0 0 12 12">
                    {P("M1 11L6 1l5 10", "#333")}
                  </Small>
                </CubeBtn>
              </ViewCube>
            </View>
          </Views>
          <StatusBar>
            <StatusRow>
              <StatusCell $w={256}>BOŞ</StatusCell>
              <StatusCell $w={1408} $line>
                Hazır
              </StatusCell>
              <StatusCell $w={76} $line>
                tf / m
              </StatusCell>
              <StatusCell $w={76} $line>
                1 : 100
              </StatusCell>
              <StatusCell $w={76} $line>
                % 60
              </StatusCell>
            </StatusRow>
          </StatusBar>
        </MainColumn>
      </Workspace>
      <TaskbarView />
      <FloorDialog />
    </Page>
  </>
)

export default App
